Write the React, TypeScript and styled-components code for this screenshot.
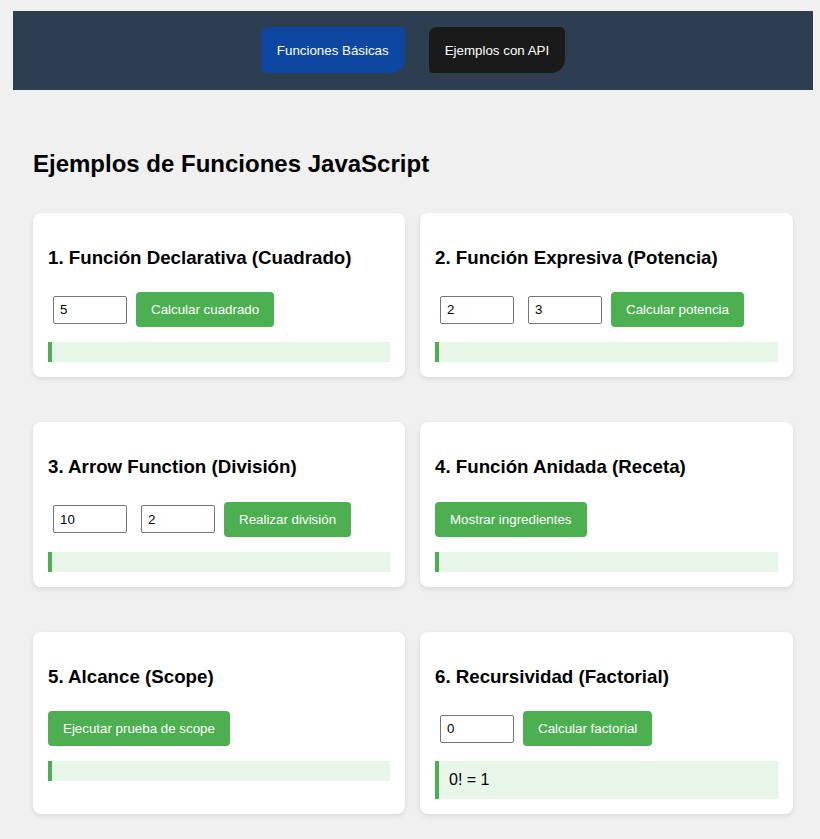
import React, { useState } from 'react'
import styled, { createGlobalStyle } from 'styled-components'

const GlobalStyle = createGlobalStyle`
  body {
    margin: 0;
    background: #f0f0f0;
    font-family: "Liberation Sans", Arial, sans-serif;
    color: #000;
  }
`

const factorial = (n: number): number => (n <= 1 ? 1 : n * factorial(n - 1))

const App = () => {
  const [side, setSide] = useState('5')
  const [base, setBase] = useState('2')
  const [exp, setExp] = useState('3')
  const [dividend, setDividend] = useState('10')
  const [divisor, setDivisor] = useState('2')
  const [fact, setFact] = useState('0')

  const [squareResult, setSquareResult] = useState('')
  const [powerResult, setPowerResult] = useState('')
  const [divResult, setDivResult] = useState('')
  const [recipeResult, setRecipeResult] = useState('')
  const [scopeResult, setScopeResult] = useState('')
  const [factResult, setFactResult] = useState('0! = 1')

  const handleSquare = () => {
    const n = Number(side)
    setSquareResult(`${n}² = ${n * n}`)
  }

  const handlePower = () => {
    setPowerResult(`${base}^${exp} = ${Math.pow(Number(base), Number(exp))}`)
  }

  const handleDivision = () => {
    const d = Number(divisor)
    setDivResult(d === 0 ? 'No se puede dividir entre 0' : `${dividend} / ${divisor} = ${Number(dividend) / d}`)
  }

  const handleRecipe = () => {
    const ingredientes = () => ['Harina', 'Huevos', 'Leche']
    setRecipeResult(`Ingredientes: ${ingredientes().join(', ')}`)
  }

  const handleScope = () => {
    const local = 'variable local'
    setScopeResult(`Dentro de la función: ${local}`)
  }

  const handleFactorial = () => {
    const n = Number(fact)
    setFactResult(`${n}! = ${factorial(n)}`)
  }

  return (
    <>
      <GlobalStyle />
      <Page>
        <Nav>
          <NavButton $variant="primary">Funciones Básicas</NavButton>
          <NavButton $variant="dark">Ejemplos con API</NavButton>
        </Nav>

        <Main>
          <PageTitle>Ejemplos de Funciones JavaScript</PageTitle>

          <Grid>
            <Card>
              <CardTitle>1. Función Declarativa (Cuadrado)</CardTitle>
              <Controls>
                <NumberInput type="number" value={side} onChange={e => setSide(e.target.value)} />
                <ActionButton onClick={handleSquare}>Calcular cuadrado</ActionButton>
              </Controls>
              <Result>{squareResult}</Result>
            </Card>

            <Card>
              <CardTitle>2. Función Expresiva (Potencia)</CardTitle>
              <Controls>
                <NumberInput type="number" value={base} onChange={e => setBase(e.target.value)} />
                <NumberInput type="number" value={exp} onChange={e => setExp(e.target.value)} />
                <ActionButton onClick={handlePower}>Calcular potencia</ActionButton>
              </Controls>
              <Result>{powerResult}</Result>
            </Card>

            <Card>
              <CardTitle>3. Arrow Function (División)</CardTitle>
              <Controls>
                <NumberInput type="number" value={dividend} onChange={e => setDividend(e.target.value)} />
                <NumberInput type="number" value={divisor} onChange={e => setDivisor(e.target.value)} />
                <ActionButton onClick={handleDivision}>Realizar división</ActionButton>
              </Controls>
              <Result>{divResult}</Result>
            </Card>

            <Card>
              <CardTitle>4. Función Anidada (Receta)</CardTitle>
              <Controls>
                <ActionButton onClick={handleRecipe}>Mostrar ingredientes</ActionButton>
              </Controls>
              <Result>{recipeResult}</Result>
            </Card>

            <Card>
              <CardTitle>5. Alcance (Scope)</CardTitle>
              <Controls>
                <ActionButton onClick={handleScope}>Ejecutar prueba de scope</ActionButton>
              </Controls>
              <Result>{scopeResult}</Result>
            </Card>

            <Card>
              <CardTitle>6. Recursividad (Factorial)</CardTitle>
              <Controls>
                <NumberInput type="number" value={fact} onChange={e => setFact(e.target.value)} />
                <ActionButton onClick={handleFactorial}>Calcular factorial</ActionButton>
              </Controls>
              <Result>{factResult}</Result>
            </Card>
          </Grid>
        </Main>
      </Page>
    </>
  )
}

const Page = styled.div`
  width: 800px;
  margin: 11px 0 0 13px;
`

const Nav = styled.nav`
  display: flex;
  justify-content: center;
  gap: 24px;
  padding: 16px 0 17px;
  background: #2c3e50;
`

const NavButton = styled.button<{ $variant: 'primary' | 'dark' }>`
  height: 46px;
  padding: 0 16px;
  border: none;
  border-radius: 8px 5px 14px 4px;
  background: ${props => (props.$variant === 'primary' ? '#0d47a1' : '#1a1a1a')};
  color: #fff;
  font-family: "Liberation Sans", Arial, sans-serif;
  font-size: 13.333px;
  cursor: pointer;
`

const Main = styled.main`
  padding: 60px 20px 20px;
`

const PageTitle = styled.h2`
  margin: 0 0 35px;
  font-size: 24px;
  font-weight: bold;
`

const Grid = styled.div`
  display: grid;
  grid-template-columns: 372px 373px;
  column-gap: 15px;
  row-gap: 45px;
`

const Card = styled.section`
  background: #fff;
  border-radius: 8px;
  padding: 15px;
  box-shadow: 0 2px 5px rgba(0, 0, 0, 0.1);
`

const CardTitle = styled.h3`
  margin: 18.72px 0;
  font-size: 18.72px;
  font-weight: bold;
`

const Controls = styled.div`
  display: flex;
  align-items: center;
  gap: 4px;
`

const NumberInput = styled.input`
  box-sizing: border-box;
  width: 74px;
  height: 28px;
  margin: 5px;
  padding: 0 6px;
  border: 1px solid #767676;
  border-radius: 2px;
  font-family: "Liberation Sans", Arial, sans-serif;
  font-size: 13.333px;
  color: #000;
  background: #fff;
  appearance: textfield;
  -moz-appearance: textfield;

  &::-webkit-outer-spin-button,
  &::-webkit-inner-spin-button {
    -webkit-appearance: none;
    margin: 0;
  }
`

const ActionButton = styled.button`
  margin: 5px 0;
  padding: 10px 15px;
  border: none;
  border-radius: 4px;
  background: #4caf50;
  color: #fff;
  font-family: "Liberation Sans", Arial, sans-serif;
  font-size: 13.333px;
  cursor: pointer;
`

const Result = styled.div`
  margin-top: 10px;
  padding: 10px;
  border-left: 4px solid #4caf50;
  background: #e8f5e9;
  font-size: 16px;
`

export default App
